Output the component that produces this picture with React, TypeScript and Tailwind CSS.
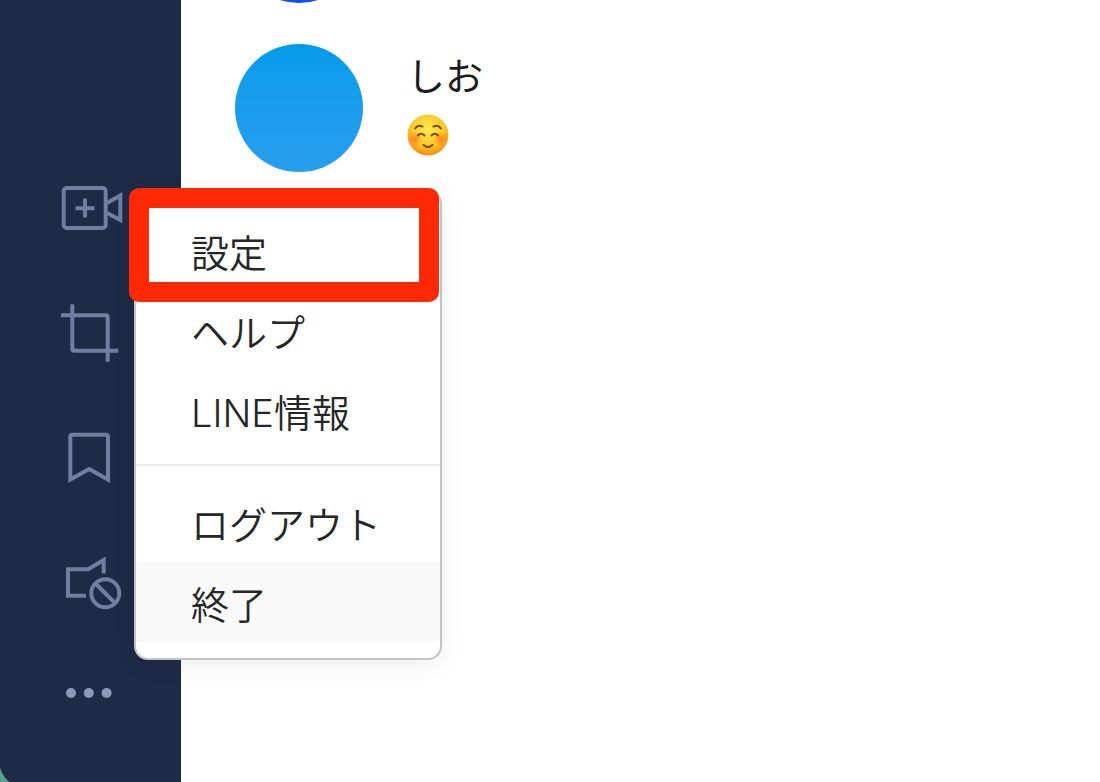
import type { ReactNode } from "react";

const menuGroups = [
  [{ label: "設定" }, { label: "ヘルプ" }, { label: "LINE情報" }],
  [{ label: "ログアウト" }, { label: "終了", active: true }],
];

function SideButton({ label, children }: { label: string; children: ReactNode }) {
  return (
    <button type="button" aria-label={label} className="size-16">
      <svg
        viewBox="0 0 64 64"
        className="size-16"
        fill="none"
        stroke="currentColor"
        strokeWidth={4}
      >
        {children}
      </svg>
    </button>
  );
}

function Sidebar() {
  return (
    <nav className="relative flex w-[181px] shrink-0 flex-col items-start justify-end gap-[61px] overflow-hidden bg-[#1e2b46] pb-[73px] pl-[60px] text-[#707f9f]">
      <SideButton label="ビデオ通話">
        <rect x="3.7" y="11" width="42" height="40" rx="3" />
        <path d="M25 21.5v19M15.5 31.2h19" />
        <path d="M47 26 60.3 18.5V43L47 36" />
      </SideButton>
      <SideButton label="画面キャプチャ">
        <path d="M1 13.3h44.7a2 2 0 0 1 2 2v44.4" />
        <path d="M12.3 2.3v44.4a2 2 0 0 0 2 2h44" />
      </SideButton>
      <SideButton label="Keep">
        <path d="M10.3 52.6V9.7a2 2 0 0 1 2-2H46a2 2 0 0 1 2 2v42.9L29.2 42z" />
      </SideButton>
      <SideButton label="通知オフ">
        <path d="M26 43.7H8V17.3h20L43.7 8v13.5" />
        <circle cx="45.3" cy="41.3" r="14" />
        <path d="m35.5 31.5 19.6 19.6" />
      </SideButton>
      <button type="button" aria-label="その他" className="h-8 w-16 text-[#8c9aba]">
        <svg viewBox="0 0 64 32" className="h-8 w-16" fill="currentColor">
          <circle cx="11" cy="16" r="5" />
          <circle cx="28.8" cy="16" r="5" />
          <circle cx="46.6" cy="16" r="5" />
        </svg>
      </button>
      {/* desktop showing past the rounded window corner */}
      <svg viewBox="0 0 10 14" className="absolute bottom-0 left-0 h-3.5 w-2.5">
        <path d="M0 0Q3 9 9.5 14H0z" fill="#5a9f89" />
      </svg>
    </nav>
  );
}

function SmileEmoji() {
  return (
    <svg viewBox="0 0 42 42" className="size-[42px]" role="img" aria-label="笑顔">
      <defs>
        <radialGradient id="face" cx="0.5" cy="0.35" r="0.65">
          <stop offset="0" stopColor="#ffe94f" />
          <stop offset="0.6" stopColor="#fdc92d" />
          <stop offset="1" stopColor="#f38f12" />
        </radialGradient>
        <radialGradient id="cheek">
          <stop offset="0" stopColor="#fb6f1c" stopOpacity="0.75" />
          <stop offset="1" stopColor="#fb6f1c" stopOpacity="0" />
        </radialGradient>
      </defs>
      <circle cx="21" cy="21" r="20.5" fill="url(#face)" />
      <circle cx="8" cy="25" r="7.5" fill="url(#cheek)" />
      <circle cx="34" cy="25" r="7.5" fill="url(#cheek)" />
      <g fill="none" stroke="#7a4a0c" strokeWidth="2" strokeLinecap="round">
        <path d="M8 14.5Q11 10.5 15.5 12.5" />
        <path d="M34 14.5Q31 10.5 26.5 12.5" />
        <path d="M11 21.5Q14 18 17.5 21.5" />
        <path d="M24.5 21.5Q28 18 31 21.5" />
        <path d="M16.5 31Q21 35 25.5 31" />
      </g>
    </svg>
  );
}

function ChatList() {
  return (
    <main className="min-w-0 flex-1 pl-[54px]">
      {/* previous row, scrolled almost out of view */}
      <div className="flex h-[3px] items-end overflow-hidden">
        <div className="size-32 shrink-0 rounded-full bg-[#1450f0]" />
      </div>
      <div className="mt-[41px] flex gap-11">
        <div className="size-32 shrink-0 rounded-full bg-linear-to-b from-[#029cea] to-[#279ded]" />
        <div className="pt-2">
          <p className="text-[38px] leading-[50px] text-[#1c1c1c]">しお</p>
          <div className="mt-3">
            <SmileEmoji />
          </div>
        </div>
      </div>
    </main>
  );
}

function MoreMenu() {
  return (
    <div className="absolute top-[190px] left-[134px] w-[308px] rounded-[14px] border-2 border-[#c4c4c8] bg-white py-4 shadow-[0_4px_24px_rgba(0,0,0,0.07)]">
      {menuGroups.map((group, i) => (
        <ul key={i} className={i > 0 ? "mt-3.5 border-t-2 border-[#ececec] pt-4" : "pt-0.5"}>
          {group.map((item) => (
            <li key={item.label}>
              <button
                type="button"
                className={`block h-20 w-full pt-1.5 pl-[55px] text-left font-['Inter','Noto_Sans_CJK_JP',sans-serif] text-[38px] font-[350] text-[#262626] ${
                  "active" in item ? "bg-[#f9f9f9]" : ""
                }`}
              >
                {item.label}
              </button>
            </li>
          ))}
        </ul>
      ))}
    </div>
  );
}

export default function App() {
  return (
    <div className="relative flex min-h-screen overflow-hidden bg-white font-['Liberation_Sans','Noto_Sans_CJK_JP',sans-serif]">
      <Sidebar />
      <ChatList />
      <MoreMenu />
      {/* marker around the settings item */}
      <div className="pointer-events-none absolute top-[188px] left-[129px] h-[114px] w-[310px] rounded-[10px] border-20 border-[#ff2905]" />
    </div>
  );
}
